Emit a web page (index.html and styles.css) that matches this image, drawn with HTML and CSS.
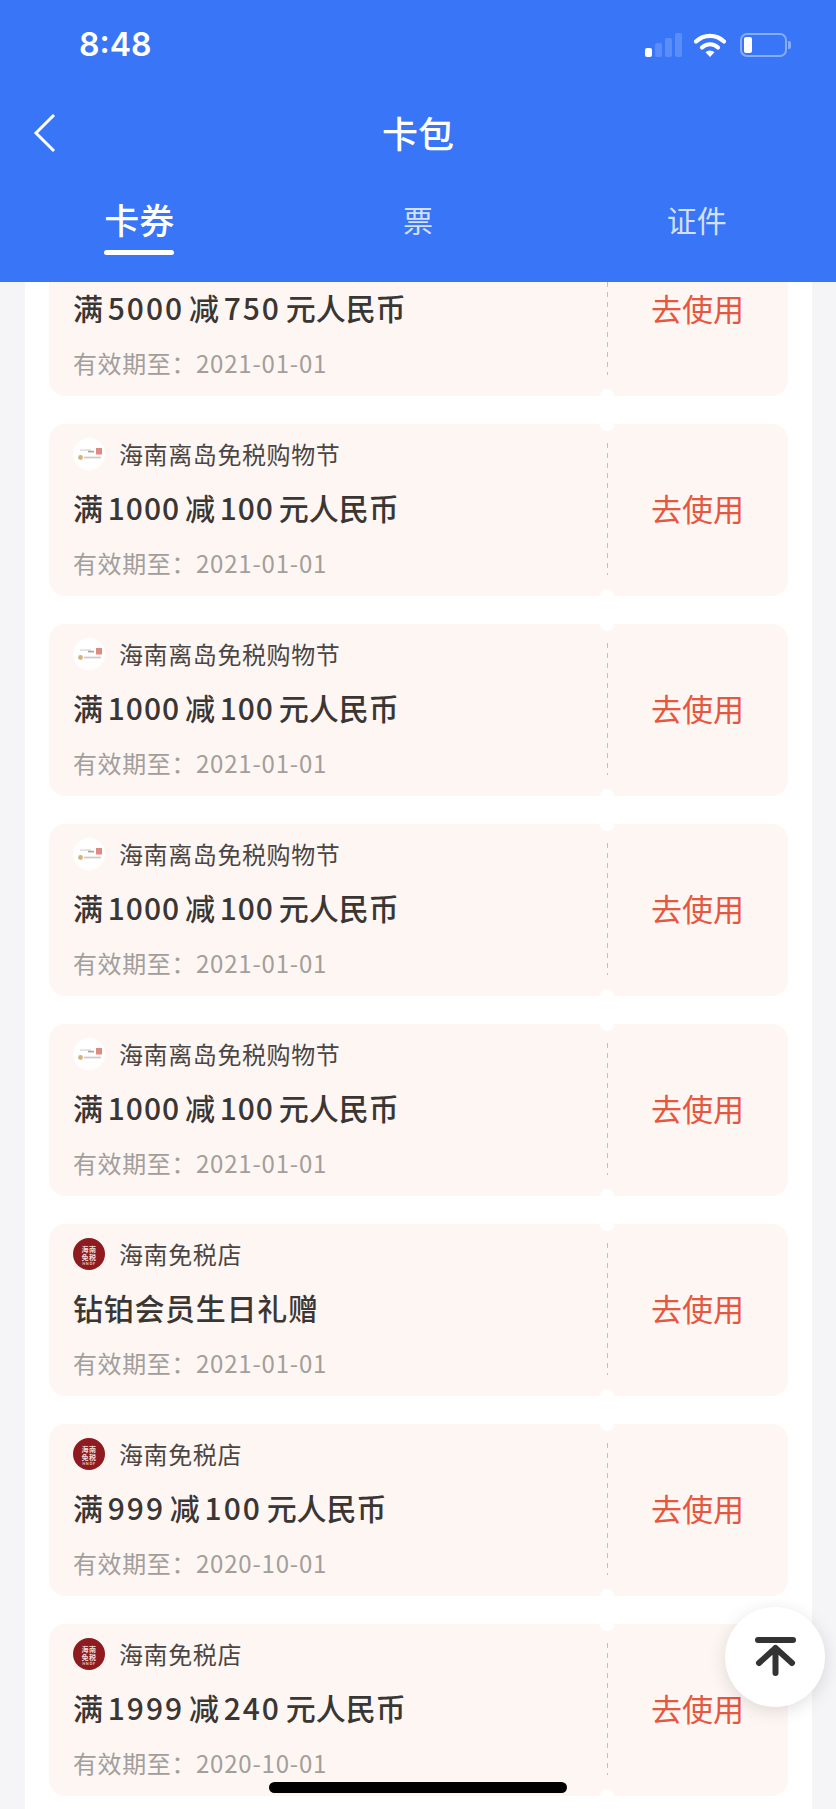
FILE: index.html
```html
<!DOCTYPE html>
<html lang="zh-CN">
<head>
<meta charset="utf-8">
<title>卡包</title>
<link rel="stylesheet" href="styles.css">
</head>
<body>
<svg class="defs" width="0" height="0" aria-hidden="true">
  <symbol id="logo-festival" viewBox="0 0 32 32">
    <circle cx="16" cy="16" r="16" fill="#fff"/>
    <rect x="7" y="11.500" width="11" height="1.200" fill="#d5d1cc"/>
    <rect x="15" y="12.800" width="6" height="1.600" fill="#a5a5a0"/>
    <rect x="23" y="10" width="6" height="6.500" fill="#dd8a80"/>
    <circle cx="7.500" cy="19.500" r="2.400" fill="#d8b078"/>
    <rect x="11" y="18.600" width="17" height="1.800" fill="#cfcbc6"/>
  </symbol>
</svg>
<div class="app">
  <header class="header">
    <div class="status">
      <span class="time">8:48</span>
      <div class="status-icons">
        <svg class="signal" width="38" height="24" viewBox="0 0 38 24">
          <rect x="0" y="15" width="7" height="9" rx="2" fill="#fff"/>
          <rect x="10" y="10" width="7" height="14" rx="2" fill="#fff" fill-opacity=".18"/>
          <rect x="20" y="5" width="7" height="19" rx="2" fill="#fff" fill-opacity=".18"/>
          <rect x="30" y="0" width="7" height="24" rx="2" fill="#fff" fill-opacity=".18"/>
        </svg>
        <svg class="wifi" width="32" height="24" viewBox="0 0 32 24">
          <path d="M2 8.500a20 20 0 0 1 28 0" fill="none" stroke="#fff" stroke-width="4.200" stroke-linecap="round"/>
          <path d="M8 14.500a11.500 11.500 0 0 1 16 0" fill="none" stroke="#fff" stroke-width="4.200" stroke-linecap="round"/>
          <path d="M11.500 19.200a6.500 6.500 0 0 1 9 0L16 24z" fill="#fff"/>
        </svg>
        <div class="battery"><span class="battery-fill"></span></div>
      </div>
    </div>
    <div class="nav">
      <svg class="back" width="24" height="40" viewBox="0 0 24 40">
        <path d="M21 2 3 20l18 18" fill="none" stroke="#fff" stroke-width="3"/>
      </svg>
      <h1 class="title">卡包</h1>
    </div>
    <nav class="tabs">
      <div class="tab tab-active"><span class="tab-label">卡券</span><span class="tab-bar"></span></div>
      <div class="tab"><span class="tab-label">票</span></div>
      <div class="tab"><span class="tab-label">证件</span></div>
    </nav>
  </header>

  <main class="panel">
    <article class="card card-clipped">
      <div class="main">
        <div class="offer">满 <span class="num-wide">5000</span> 减 <span class="num-wide">750</span> 元人民币</div>
        <div class="expiry">有效期至：<span class="date">2021-01-01</span></div>
      </div>
      <div class="action">去使用</div>
    </article>

    <article class="card">
      <div class="main">
        <div class="brand"><svg class="logo" width="32" height="32"><use href="#logo-festival"/></svg><span>海南离岛免税购物节</span></div>
        <div class="offer">满 <span class="num">1000</span> 减 <span class="num">100</span> 元人民币</div>
        <div class="expiry">有效期至：<span class="date">2021-01-01</span></div>
      </div>
      <div class="action">去使用</div>
    </article>

    <article class="card">
      <div class="main">
        <div class="brand"><svg class="logo" width="32" height="32"><use href="#logo-festival"/></svg><span>海南离岛免税购物节</span></div>
        <div class="offer">满 <span class="num">1000</span> 减 <span class="num">100</span> 元人民币</div>
        <div class="expiry">有效期至：<span class="date">2021-01-01</span></div>
      </div>
      <div class="action">去使用</div>
    </article>

    <article class="card">
      <div class="main">
        <div class="brand"><svg class="logo" width="32" height="32"><use href="#logo-festival"/></svg><span>海南离岛免税购物节</span></div>
        <div class="offer">满 <span class="num">1000</span> 减 <span class="num">100</span> 元人民币</div>
        <div class="expiry">有效期至：<span class="date">2021-01-01</span></div>
      </div>
      <div class="action">去使用</div>
    </article>

    <article class="card">
      <div class="main">
        <div class="brand"><svg class="logo" width="32" height="32"><use href="#logo-festival"/></svg><span>海南离岛免税购物节</span></div>
        <div class="offer">满 <span class="num">1000</span> 减 <span class="num">100</span> 元人民币</div>
        <div class="expiry">有效期至：<span class="date">2021-01-01</span></div>
      </div>
      <div class="action">去使用</div>
    </article>

    <article class="card">
      <div class="main">
        <div class="brand"><svg class="logo" width="32" height="32" viewBox="0 0 32 32"><circle cx="16" cy="16" r="16" fill="#8e1b1f"/><text class="logo-cn" x="16" y="13.500">海南</text><text class="logo-cn" x="16" y="21.500">免税</text><text class="logo-en" x="16" y="27">HNDF</text></svg><span>海南免税店</span></div>
        <div class="offer offer-gift">钻铂会员生日礼赠</div>
        <div class="expiry">有效期至：<span class="date">2021-01-01</span></div>
      </div>
      <div class="action">去使用</div>
    </article>

    <article class="card">
      <div class="main">
        <div class="brand"><svg class="logo" width="32" height="32" viewBox="0 0 32 32"><circle cx="16" cy="16" r="16" fill="#8e1b1f"/><text class="logo-cn" x="16" y="13.500">海南</text><text class="logo-cn" x="16" y="21.500">免税</text><text class="logo-en" x="16" y="27">HNDF</text></svg><span>海南免税店</span></div>
        <div class="offer">满 <span class="num-wide">999</span> 减 <span class="num-wide">100</span> 元人民币</div>
        <div class="expiry">有效期至：<span class="date">2020-10-01</span></div>
      </div>
      <div class="action">去使用</div>
    </article>

    <article class="card">
      <div class="main">
        <div class="brand"><svg class="logo" width="32" height="32" viewBox="0 0 32 32"><circle cx="16" cy="16" r="16" fill="#8e1b1f"/><text class="logo-cn" x="16" y="13.500">海南</text><text class="logo-cn" x="16" y="21.500">免税</text><text class="logo-en" x="16" y="27">HNDF</text></svg><span>海南免税店</span></div>
        <div class="offer">满 <span class="num-wide">1999</span> 减 <span class="num-wide">240</span> 元人民币</div>
        <div class="expiry">有效期至：<span class="date">2020-10-01</span></div>
      </div>
      <div class="action">去使用</div>
    </article>
  </main>

  <button class="to-top" type="button" aria-label="回到顶部">
    <svg width="44" height="44" viewBox="0 0 44 44">
      <path d="M5 5h35M22.500 38V13M6 28 22.500 13 39 28" fill="none" stroke="#333" stroke-width="6" stroke-linecap="round" stroke-linejoin="round"/>
    </svg>
  </button>
  <div class="home-indicator"></div>
</div>
</body>
</html>
```

FILE: styles.css
```css
* {
  box-sizing: border-box;
}

html,
body {
  margin: 0;
  padding: 0;
}

body {
  font-family: "Noto Sans CJK SC", "Noto Sans", sans-serif;
  background: #f5f5f8;
}

.defs {
  display: block;
  height: 0;
}

.logo-cn {
  font-size: 7px;
  font-weight: 700;
  fill: #f5dcd6;
  text-anchor: middle;
}

.logo-en {
  font-size: 4px;
  font-weight: 700;
  fill: #e6bcb4;
  text-anchor: middle;
}

.app {
  position: relative;
  width: 836px;
  height: 1809px;
  overflow: hidden;
  display: flex;
  flex-direction: column;
}

.header {
  flex: none;
  height: 282px;
  background: #3875f7;
  color: #fff;
}

.status {
  height: 90px;
  padding: 0 45px 0 79px;
  display: flex;
  align-items: center;
  justify-content: space-between;
}

.time {
  font-family: "Inter", "Liberation Sans", sans-serif;
  font-size: 32px;
  font-weight: 600;
  line-height: 40px;
}

.status-icons {
  display: flex;
  align-items: center;
}

.signal {
  display: block;
  margin-right: 11px;
}

.wifi {
  display: block;
  margin-right: 14px;
}

.battery {
  position: relative;
  width: 47px;
  height: 24px;
  padding: 2px;
  border: 2px solid rgba(255, 255, 255, 0.4);
  border-radius: 7px;
  margin-right: 4px;
}

.battery::after {
  content: "";
  position: absolute;
  right: -6px;
  top: 6px;
  width: 3px;
  height: 8px;
  border-radius: 0 2px 2px 0;
  background: rgba(255, 255, 255, 0.4);
}

.battery-fill {
  display: block;
  width: 8px;
  height: 100%;
  border-radius: 2px;
  background: #fff;
}

.nav {
  position: relative;
  height: 86px;
  padding-bottom: 2px;
  display: flex;
  align-items: center;
  justify-content: center;
}

.back {
  position: absolute;
  left: 33px;
  top: 23px;
}

.title {
  margin: 0;
  font-size: 36px;
  font-weight: 500;
  line-height: 50px;
}

.tabs {
  display: grid;
  grid-template-columns: repeat(3, 1fr);
  padding-top: 18px;
}

.tab {
  display: flex;
  flex-direction: column;
  align-items: center;
}

.tab-label {
  font-size: 30px;
  line-height: 50px;
  color: rgba(255, 255, 255, 0.78);
}

.tab-active .tab-label {
  font-size: 35px;
  font-weight: 500;
  color: #fff;
}

.tab-bar {
  width: 70px;
  height: 5px;
  margin-top: 6px;
  border-radius: 3px;
  background: #fff;
}

.panel {
  flex: 1;
  width: 787px;
  margin-left: 25px;
  padding: 0 24px;
  display: flex;
  flex-direction: column;
  gap: 28px;
  overflow: hidden;
  background: #fff;
}

.card {
  position: relative;
  flex: none;
  width: 739px;
  height: 172px;
  display: flex;
  border-radius: 16px;
  background: #fef6f3;
}

.card-clipped {
  height: 114px;
  border-radius: 0 0 16px 16px;
}

.card::before,
.card::after {
  content: "";
  position: absolute;
  left: 551px;
  width: 14px;
  height: 14px;
  border-radius: 50%;
  background: #fff;
}

.card::before {
  top: -7px;
}

.card::after {
  bottom: -7px;
}

.card-clipped::before {
  display: none;
}

.main {
  width: 558px;
  padding: 14px 0 17px 24px;
  display: flex;
  flex-direction: column;
  justify-content: flex-end;
}

.brand {
  height: 32px;
  margin-bottom: 17px;
  display: flex;
  align-items: center;
  gap: 14px;
  font-size: 24px;
  letter-spacing: 0.6px;
  line-height: 32px;
  color: #4a4644;
}

.logo {
  display: block;
  flex: none;
}

.offer {
  height: 40px;
  margin-bottom: 20px;
  font-size: 30px;
  font-weight: 500;
  line-height: 40px;
  word-spacing: -2px;
  white-space: pre-wrap;
  color: #3a3634;
}

.offer-gift {
  letter-spacing: 0.7px;
}

.num {
  letter-spacing: 1px;
}

.num-wide {
  letter-spacing: 2px;
}

.expiry {
  height: 32px;
  font-size: 24px;
  line-height: 32px;
  letter-spacing: 0.6px;
  color: #a29e9b;
}

.date {
  letter-spacing: 0.8px;
}

.action {
  position: relative;
  flex: 1;
  padding-bottom: 4px;
  display: flex;
  align-items: center;
  justify-content: center;
  font-size: 31px;
  line-height: 40px;
  color: #e5573f;
}

.action::before {
  content: "";
  position: absolute;
  left: 0;
  top: 19px;
  bottom: 21px;
  width: 1px;
  background: repeating-linear-gradient(to bottom, #eeb0a2 0 5px, transparent 5px 10px);
}

.card-clipped .action {
  align-items: flex-end;
  padding-bottom: 68px;
}

.card-clipped .action::before {
  top: 0;
}

.to-top {
  position: absolute;
  left: 725px;
  top: 1607px;
  width: 100px;
  height: 100px;
  padding: 0;
  border: 0;
  border-radius: 50%;
  display: flex;
  align-items: center;
  justify-content: center;
  background: #fff;
  box-shadow: 0 4px 18px rgba(0, 0, 0, 0.12);
}

.to-top svg {
  display: block;
}

.home-indicator {
  position: absolute;
  left: 269px;
  top: 1782px;
  width: 298px;
  height: 11px;
  border-radius: 6px;
  background: #000;
}
```
